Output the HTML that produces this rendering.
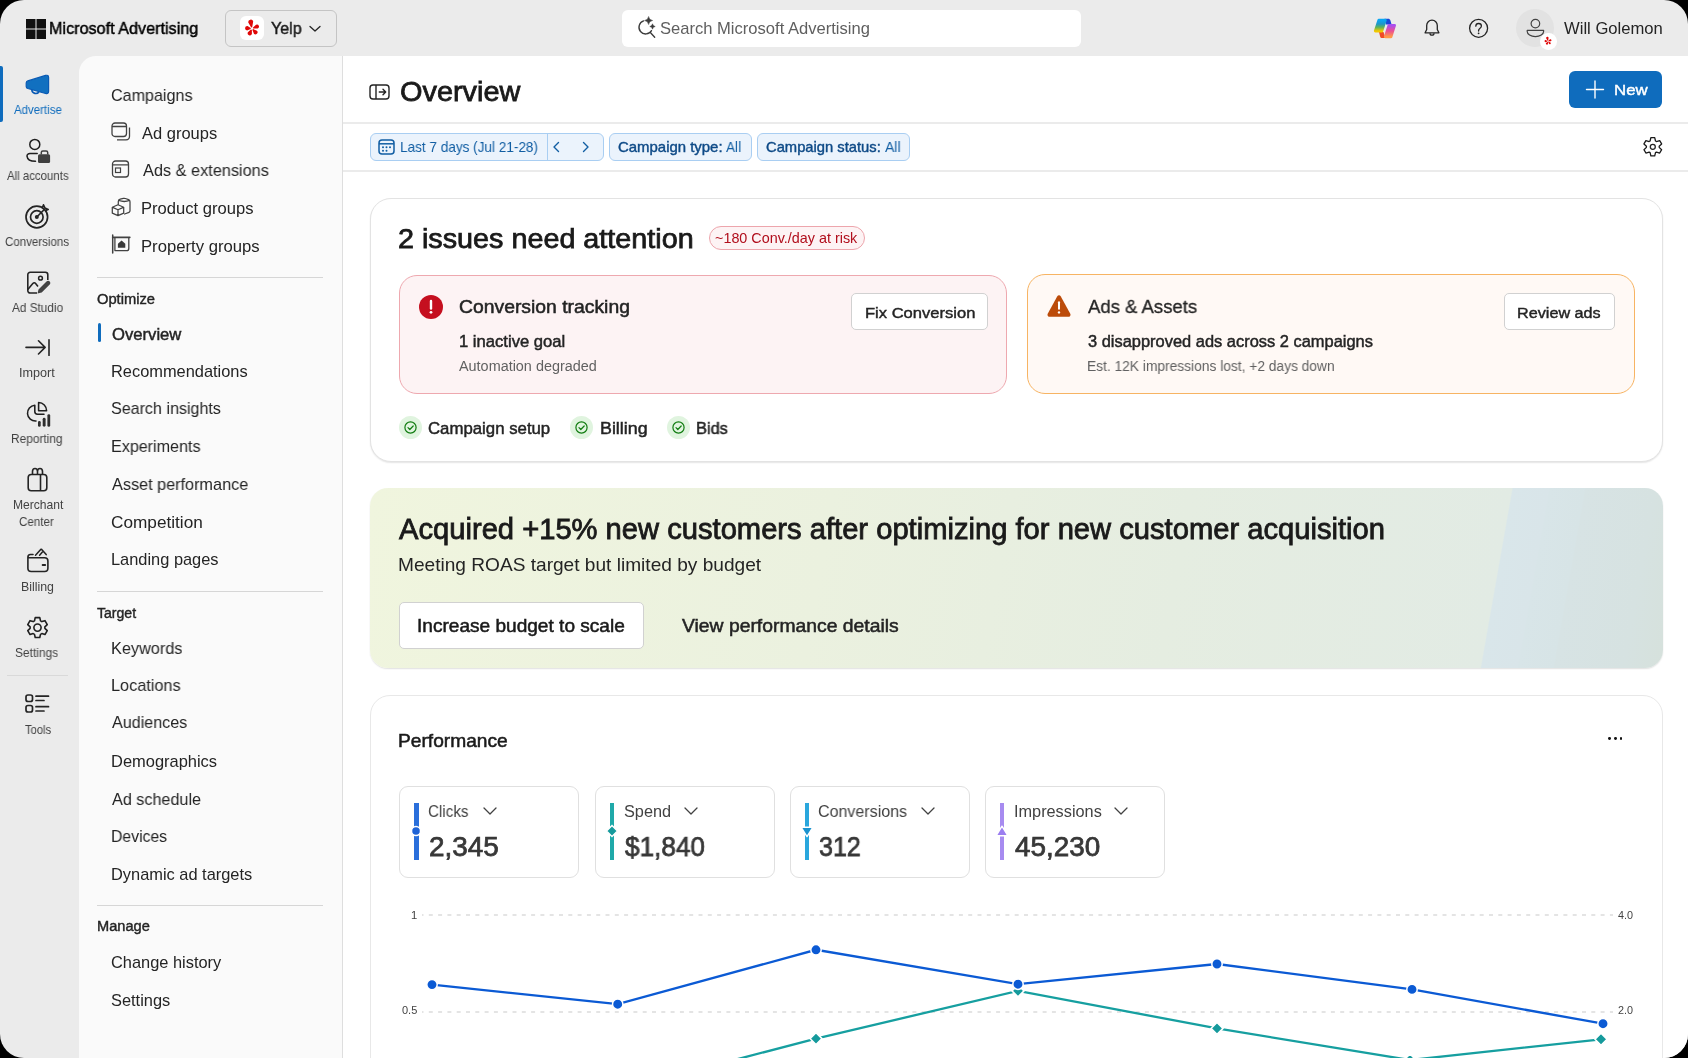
<!DOCTYPE html>
<html><head><meta charset="utf-8"><style>
html,body{margin:0;padding:0;}
body{width:1688px;height:1058px;background:#000;overflow:hidden;position:relative;font-family:"Liberation Sans",sans-serif;}
#win{position:absolute;left:0;top:0;width:1688px;height:1058px;border-radius:24px;background:#ebebeb;overflow:hidden;}
.t{position:absolute;white-space:nowrap;line-height:1;transform-origin:0 0;will-change:transform;}
.r{position:absolute;box-sizing:border-box;}
</style></head><body><div id="win">
<div class="r" style="left:79px;top:56px;width:263px;height:1040px;background:#fafafa;border-top-left-radius:17px;"></div>
<div class="r" style="left:343px;top:56px;width:1345px;height:1002px;background:#fff;"></div>
<div class="r" style="left:342px;top:56px;width:1px;height:1002px;background:#dedede;"></div>
<div class="r" style="left:343px;top:122px;width:1345px;height:2px;background:#ebebeb;"></div>
<div class="r" style="left:343px;top:170px;width:1345px;height:2px;background:#ebebeb;"></div>
<svg class="r" style="left:26px;top:18.5px;" width="20" height="20" viewBox="0 0 20 20" fill="none"><rect x="0" y="0" width="9.5" height="9.5" fill="#111"/><rect x="10.5" y="0" width="9.5" height="9.5" fill="#111"/><rect x="0" y="10.5" width="9.5" height="9.5" fill="#111"/><rect x="10.5" y="10.5" width="9.5" height="9.5" fill="#111"/></svg>
<div class="t" style="left:48.71px;top:20.00px;font-size:17.2px;color:#000;transform:scaleX(0.9410);-webkit-text-stroke:0.48px #000;">Microsoft Advertising</div>
<div class="r" style="left:225px;top:10px;width:112px;height:37px;border:1.3px solid #c4c4c4;border-radius:6px;"></div>
<div class="r" style="left:240px;top:16px;width:24px;height:24px;background:#fff;border-radius:6px;"></div>
<svg class="r" style="left:240px;top:16px;" width="24" height="24" viewBox="0 0 24 24" fill="none"><path fill="#e00707" d="M12.18 11.33L13.20 5.62A2.50 2.50 0 0 0 8.28 6.50L11.20 11.51ZM10.75 12.00L7.49 9.91A2.30 2.30 0 0 0 7.09 14.49L10.66 12.99ZM10.96 13.50L7.87 16.30A2.20 2.20 0 0 0 11.90 18.07L11.88 13.90ZM12.37 13.81L13.93 17.74A2.10 2.10 0 0 0 16.96 14.83L13.09 13.12ZM13.20 12.61L17.64 12.54A2.10 2.10 0 0 0 16.06 8.64L12.82 11.69Z"/></svg>
<div class="t" style="left:270.86px;top:20.00px;font-size:16.2px;color:#1a1a1a;transform:scaleX(0.9901);-webkit-text-stroke:0.45px #1a1a1a;">Yelp</div>
<svg class="r" style="left:309px;top:25px;" width="12" height="8" viewBox="0 0 12 8" fill="none"><path d="M1 1.5l5 4.5 5-4.5" stroke="#242424" stroke-width="1.3" stroke-linecap="round" stroke-linejoin="round"/></svg>
<div class="r" style="left:622px;top:9.5px;width:459px;height:37px;background:#fff;border-radius:6px;"></div>
<svg class="r" style="left:630px;top:12px;" width="32" height="30" viewBox="630 12 32 30" fill="none"><path d="M643.6 20.9A6.7 6.7 0 1 0 651.5 30.6M650.8 33L654.7 37.3" stroke="#3b3b3b" stroke-width="1.35" stroke-linecap="round"/><path d="M648.6 16.5Q649.12 19.98 652.6 20.5Q649.12 21.02 648.6 24.5Q648.08 21.02 644.6 20.5Q648.08 19.98 648.6 16.5ZM652.5 23.8Q652.85 26.15 655.2 26.5Q652.85 26.85 652.5 29.2Q652.15 26.85 649.8 26.5Q652.15 26.15 652.5 23.8Z" fill="#3b3b3b" stroke="#3b3b3b" stroke-width=".5" stroke-linejoin="round"/></svg>
<div class="t" style="left:659.70px;top:20.00px;font-size:16.1px;color:#5f5f5f;transform:scaleX(1.0290);">Search Microsoft Advertising</div>
<svg class="r" style="left:1370px;top:14px;" width="30" height="28" viewBox="0 0 30 28" fill="none"><defs><linearGradient id="cp1" x1="0" y1="0" x2="0" y2="1"><stop offset="0" stop-color="#0aa6f2"/><stop offset=".35" stop-color="#1f96c8"/><stop offset=".65" stop-color="#5cb35a"/><stop offset="1" stop-color="#f3c800"/></linearGradient><linearGradient id="cp2" x1="0" y1="0" x2="0" y2="1"><stop offset="0" stop-color="#a94ff0"/><stop offset=".5" stop-color="#ec4f93"/><stop offset="1" stop-color="#ff9a48"/></linearGradient></defs>
<path d="M14.5 4.8H18c1.4 0 2 .6 2.4 1.8L21.6 10.4H16z" fill="#1a48d8"/>
<path d="M9 18H13.5L15.4 24H12.2c-1.2 0-1.8-.5-2.1-1.5z" fill="#f04a26"/>
<path d="M8.8 6.2H15.3L11.8 17H5.3z" fill="url(#cp1)" stroke="url(#cp1)" stroke-width="2.8" stroke-linejoin="round"/>
<path d="M19 11.3H24.6L21 22.8H15.3z" fill="url(#cp2)" stroke="url(#cp2)" stroke-width="2.8" stroke-linejoin="round"/></svg>
<svg class="r" style="left:1422px;top:18px;" width="20" height="20" viewBox="0 0 20 20" fill="none"><path d="M10 2.2c-3 0-5.3 2.4-5.3 5.4v3.9l-1.6 3.3h13.8l-1.6-3.3V7.6c0-3-2.3-5.4-5.3-5.4z" stroke="#242424" stroke-width="1.3" stroke-linejoin="round"/><path d="M8 15.2a2 2 0 0 0 4 0" stroke="#242424" stroke-width="1.3"/></svg>
<svg class="r" style="left:1468px;top:18px;" width="21" height="21" viewBox="0 0 21 21" fill="none"><circle cx="10.6" cy="10.3" r="9" stroke="#242424" stroke-width="1.3"/><path d="M7.8 8.2c0-1.6 1.2-2.7 2.8-2.7s2.8 1.1 2.8 2.6c0 1.2-.7 1.8-1.6 2.4-.8.6-1.2 1-1.2 2v.5" stroke="#242424" stroke-width="1.3" stroke-linecap="round"/><circle cx="10.6" cy="15.3" r=".9" fill="#242424"/></svg>
<div class="r" style="left:1516px;top:9px;width:38px;height:38px;background:#e2e2e2;border-radius:50%;"></div>
<svg class="r" style="left:1525px;top:18px;" width="20" height="21" viewBox="0 0 20 21" fill="none"><circle cx="10.4" cy="5.6" r="4.3" stroke="#424242" stroke-width="1.2"/><path d="M2.2 12.3h16.4v1.3c0 2.6-3.5 5-8.2 5s-8.2-2.4-8.2-5z" stroke="#424242" stroke-width="1.2" stroke-linejoin="round"/></svg>
<div class="r" style="left:1540px;top:33px;width:16.5px;height:16.5px;background:#fff;border-radius:50%;"></div>
<svg class="r" style="left:1542px;top:35px;" width="12" height="12" viewBox="0 0 24 24" fill="none"><path fill="#e00707" d="M12.18 11.33L13.20 5.62A2.50 2.50 0 0 0 8.28 6.50L11.20 11.51ZM10.75 12.00L7.49 9.91A2.30 2.30 0 0 0 7.09 14.49L10.66 12.99ZM10.96 13.50L7.87 16.30A2.20 2.20 0 0 0 11.90 18.07L11.88 13.90ZM12.37 13.81L13.93 17.74A2.10 2.10 0 0 0 16.96 14.83L13.09 13.12ZM13.20 12.61L17.64 12.54A2.10 2.10 0 0 0 16.06 8.64L12.82 11.69Z"/></svg>
<div class="t" style="left:1563.64px;top:20.00px;font-size:16.1px;color:#242424;transform:scaleX(1.0331);">Will Golemon</div>
<div class="r" style="left:0px;top:66px;width:2.5px;height:56px;background:#0f6cbd;border-radius:0 2px 2px 0;"></div>
<div class="t" style="left:13.50px;top:104.00px;font-size:12.1px;color:#0f6cbd;transform:scaleX(0.9485);">Advertise</div>
<div class="t" style="left:6.64px;top:170.00px;font-size:12.1px;color:#424242;transform:scaleX(0.9451);">All accounts</div>
<div class="t" style="left:4.62px;top:236.00px;font-size:12.1px;color:#424242;transform:scaleX(0.9516);">Conversions</div>
<div class="t" style="left:12.14px;top:302.00px;font-size:12.1px;color:#424242;transform:scaleX(0.9738);">Ad Studio</div>
<div class="t" style="left:18.62px;top:367.00px;font-size:12.1px;color:#424242;transform:scaleX(1.0436);">Import</div>
<div class="t" style="left:11.34px;top:433.00px;font-size:12.1px;color:#424242;transform:scaleX(0.9822);">Reporting</div>
<div class="t" style="left:12.70px;top:499.00px;font-size:12.1px;color:#424242;transform:scaleX(0.9929);">Merchant</div>
<div class="t" style="left:19.48px;top:516.00px;font-size:12.1px;color:#424242;transform:scaleX(0.9587);">Center</div>
<div class="t" style="left:21.12px;top:581.00px;font-size:12.1px;color:#424242;transform:scaleX(1.0227);">Billing</div>
<div class="t" style="left:15.26px;top:647.00px;font-size:12.1px;color:#424242;transform:scaleX(0.9853);">Settings</div>
<div class="t" style="left:24.64px;top:724.00px;font-size:12.1px;color:#424242;transform:scaleX(0.9231);">Tools</div>
<div class="r" style="left:7px;top:675px;width:61px;height:1px;background:#d9d9d9;"></div>
<svg class="r" style="left:20px;top:68px;" width="36" height="32" viewBox="20 68 36 32" fill="none"><path d="M26.2 83Q26.2 81.4 27.8 80.9L45.6 75.4Q48.6 74.6 48.6 77.6V91.3Q48.6 94.3 45.6 93.5L27.8 88.5Q26.2 88 26.2 86.4Z" fill="#1170c0" stroke="#0a5ab4" stroke-width="1.2" stroke-linejoin="round"/><path d="M31.8 89V89.6A3.9 3.9 0 0 0 39.2 91.3" stroke="#0a5ab4" stroke-width="1.6"/></svg>
<svg class="r" style="left:25px;top:138px;" width="26" height="26" viewBox="0 0 26 26" fill="none"><circle cx="9.8" cy="6.4" r="5" stroke="#1f1f1f" stroke-width="1.5"/><path d="M12.2 15.4H4.9C3.2 15.4 2 16.6 2 18.1c.3 3 3.5 5.2 8.5 5.2" stroke="#1f1f1f" stroke-width="1.5" stroke-linecap="round"/><rect x="13" y="16.3" width="12.1" height="8.6" rx="1.5" fill="#3f3f3f"/><path d="M16.3 16.5V14.6c0-1 .6-1.6 1.6-1.6h3.2c1 0 1.6.6 1.6 1.6v1.9" stroke="#3f3f3f" stroke-width="1.5"/></svg>
<svg class="r" style="left:25px;top:204px;" width="25" height="25" viewBox="0 0 25 25" fill="none"><circle cx="11.8" cy="13" r="10.8" stroke="#242424" stroke-width="1.7"/><circle cx="11.8" cy="13" r="6.3" stroke="#242424" stroke-width="1.7"/><circle cx="11.8" cy="13" r="2" fill="#242424"/><path d="M11.8 13l8-8" stroke="#242424" stroke-width="1.7"/><path d="M17.5 3.3l1-2.5 1.5 3.2 3.2 1.4-2.5 1" stroke="#242424" stroke-width="1.6" stroke-linejoin="round"/></svg>
<svg class="r" style="left:26px;top:271px;" width="25" height="25" viewBox="0 0 25 25" fill="none"><path d="M11 22H4.3C2.8 22 1.8 21 1.8 19.5V3.8c0-1.5 1-2.5 2.5-2.5h15c1.5 0 2.5 1 2.5 2.5V9" stroke="#242424" stroke-width="1.6"/><circle cx="14.5" cy="7.2" r="1.9" stroke="#242424" stroke-width="1.5"/><path d="M1.8 18.5l5-6c1-1 2-1 3 .2l2.2 2.7" stroke="#242424" stroke-width="1.6"/><path d="M11.5 22.5l1-4 8-8c1-1 2.4-1 3.2 0s.9 2.2 0 3l-8 8z" fill="#424242"/></svg>
<svg class="r" style="left:25px;top:339px;" width="25" height="17" viewBox="0 0 25 17" fill="none"><path d="M1 8.4h19M13.5 1.8l6.6 6.6-6.6 6.6M24 .8v15.6" stroke="#242424" stroke-width="1.6" stroke-linecap="round" stroke-linejoin="round"/></svg>
<svg class="r" style="left:20px;top:396px;" width="36" height="36" viewBox="20 396 36 36" fill="none"><path d="M34.8 405.2A7.9 7.9 0 0 0 36 421M34.8 405.2V411.6Q34.8 414.3 37.5 414.3H44" stroke="#1f1f1f" stroke-width="1.55" stroke-linecap="round" stroke-linejoin="round"/><path d="M38.6 402.6V410.8H46.6A8.1 8.1 0 0 0 38.6 402.6Z" stroke="#1f1f1f" stroke-width="1.55" stroke-linejoin="round"/><rect x="38" y="421" width="2.7" height="5.8" rx="1.35" fill="#2e2e2e"/><rect x="42.7" y="417.7" width="2.9" height="9.1" rx="1.45" fill="#2e2e2e"/><rect x="47.4" y="414.2" width="2.8" height="12.6" rx="1.4" fill="#2e2e2e"/></svg>
<svg class="r" style="left:27px;top:467px;" width="21" height="25" viewBox="0 0 21 25" fill="none"><rect x="1.2" y="7.5" width="18.6" height="16.3" rx="3" stroke="#242424" stroke-width="1.6"/><path d="M13.5 7.5v16.3" stroke="#242424" stroke-width="1.6"/><path d="M5.5 7.5V4.5c0-1.7 1.1-3 2.5-3s2.5 1.3 2.5 3v3M10.5 7.5V4.5c0-1.7 1.1-3 2.5-3s2.5 1.3 2.5 3v3" stroke="#242424" stroke-width="1.6"/></svg>
<svg class="r" style="left:20px;top:540px;" width="36" height="40" viewBox="20 540 36 40" fill="none"><path d="M33 554.5H30.4Q27.9 554.5 27.9 557.2V568.2Q27.9 571.5 31.2 571.5H44.6Q47.9 571.5 47.9 568.2V561Q47.9 557.8 44.6 557.8H27.9" stroke="#242424" stroke-width="1.6" stroke-linejoin="round" stroke-linecap="round"/><path d="M35.5 555.3L40.7 549.4Q41.2 548.9 41.7 549.4L46.2 554.6M39.6 555.3L42.4 552" stroke="#242424" stroke-width="1.5" stroke-linecap="round" stroke-linejoin="round"/><path d="M42.6 565H45.2" stroke="#242424" stroke-width="1.8" stroke-linecap="round"/></svg>
<svg class="r" style="left:20px;top:610px;" width="36" height="36" viewBox="20 610 36 36" fill="none"><path d="M34.49 620.84 L35.21 617.66 L39.79 617.66 L40.51 620.84 L41.85 621.61 L44.96 620.64 L47.25 624.62 L44.86 626.83 L44.86 628.37 L47.25 630.58 L44.96 634.56 L41.85 633.59 L40.51 634.36 L39.79 637.54 L35.21 637.54 L34.49 634.36 L33.15 633.59 L30.04 634.56 L27.75 630.58 L30.14 628.37 L30.14 626.83 L27.75 624.62 L30.04 620.64 L33.15 621.61Z" stroke="#1f1f1f" stroke-width="1.6" stroke-linejoin="round"/><circle cx="37.5" cy="627.6" r="3.6" stroke="#1f1f1f" stroke-width="1.6"/></svg>
<svg class="r" style="left:25px;top:694px;" width="25" height="20" viewBox="0 0 25 20" fill="none"><rect x="1" y="1" width="6.5" height="6.5" rx="2" stroke="#242424" stroke-width="1.7"/><rect x="1" y="11.5" width="6.5" height="6.5" rx="2" stroke="#242424" stroke-width="1.7"/><path d="M11 2.2h12.5M11 6.5h8M11 12.7h12.5M11 17h8" stroke="#242424" stroke-width="1.7" stroke-linecap="round"/></svg>
<div class="t" style="left:110.62px;top:87.00px;font-size:16.4px;color:#242424;transform:scaleX(0.9833);">Campaigns</div>
<div class="t" style="left:142.42px;top:125.00px;font-size:16.4px;color:#242424;transform:scaleX(1.0058);">Ad groups</div>
<div class="t" style="left:142.86px;top:162.00px;font-size:16.4px;color:#242424;transform:scaleX(0.9941);">Ads &amp; extensions</div>
<div class="t" style="left:141.26px;top:200.00px;font-size:16.4px;color:#242424;transform:scaleX(1.0119);">Product groups</div>
<div class="t" style="left:141.26px;top:238.00px;font-size:16.4px;color:#242424;transform:scaleX(1.0171);">Property groups</div>
<div class="r" style="left:97px;top:277.3px;width:226px;height:1.2px;background:#d6d6d6;"></div>
<div class="t" style="left:97.26px;top:292.00px;font-size:14.0px;color:#242424;transform:scaleX(1.0507);-webkit-text-stroke:0.39px #242424;">Optimize</div>
<div class="r" style="left:97.5px;top:323px;width:3px;height:19px;background:#0f6cbd;border-radius:2px;"></div>
<div class="t" style="left:111.73px;top:327.00px;font-size:15.8px;color:#242424;transform:scaleX(1.0533);-webkit-text-stroke:0.44px #242424;">Overview</div>
<div class="t" style="left:110.70px;top:363.00px;font-size:16.4px;color:#242424;">Recommendations</div>
<div class="t" style="left:110.70px;top:400.00px;font-size:16.4px;color:#242424;transform:scaleX(0.9810);">Search insights</div>
<div class="t" style="left:110.70px;top:438.00px;font-size:16.4px;color:#242424;transform:scaleX(0.9826);">Experiments</div>
<div class="t" style="left:111.50px;top:476.00px;font-size:16.4px;color:#242424;transform:scaleX(0.9900);">Asset performance</div>
<div class="t" style="left:110.70px;top:514.00px;font-size:16.4px;color:#242424;transform:scaleX(1.0494);">Competition</div>
<div class="t" style="left:110.70px;top:551.00px;font-size:16.4px;color:#242424;">Landing pages</div>
<div class="r" style="left:97px;top:591.3px;width:226px;height:1.2px;background:#d6d6d6;"></div>
<div class="t" style="left:97.26px;top:606.00px;font-size:14.0px;color:#242424;transform:scaleX(1.0048);-webkit-text-stroke:0.39px #242424;">Target</div>
<div class="t" style="left:110.70px;top:640.00px;font-size:16.4px;color:#242424;transform:scaleX(0.9926);">Keywords</div>
<div class="t" style="left:110.70px;top:677.00px;font-size:16.4px;color:#242424;transform:scaleX(0.9924);">Locations</div>
<div class="t" style="left:111.50px;top:714.00px;font-size:16.4px;color:#242424;transform:scaleX(0.9832);">Audiences</div>
<div class="t" style="left:111.20px;top:753.00px;font-size:16.4px;color:#242424;transform:scaleX(1.0038);">Demographics</div>
<div class="t" style="left:112.00px;top:791.00px;font-size:16.4px;color:#242424;transform:scaleX(0.9876);">Ad schedule</div>
<div class="t" style="left:111.20px;top:828.00px;font-size:16.4px;color:#242424;transform:scaleX(0.9622);">Devices</div>
<div class="t" style="left:111.20px;top:866.00px;font-size:16.4px;color:#242424;">Dynamic ad targets</div>
<div class="r" style="left:97px;top:904.8px;width:226px;height:1.2px;background:#d6d6d6;"></div>
<div class="t" style="left:97.40px;top:919.00px;font-size:14.0px;color:#242424;transform:scaleX(1.0427);-webkit-text-stroke:0.39px #242424;">Manage</div>
<div class="t" style="left:111.20px;top:954.00px;font-size:16.4px;color:#242424;transform:scaleX(0.9963);">Change history</div>
<div class="t" style="left:111.20px;top:992.00px;font-size:16.4px;color:#242424;transform:scaleX(0.9969);">Settings</div>
<svg class="r" style="left:111px;top:122px;" width="20" height="19" viewBox="0 0 20 19" fill="none"><rect x="1" y="1" width="14.5" height="13.5" rx="3" stroke="#424242" stroke-width="1.3"/><path d="M1 4.5h14.5" stroke="#424242" stroke-width="1.3"/><path d="M18.5 5.5v8.8c0 2-1.5 3.5-3.5 3.5H6" stroke="#424242" stroke-width="1.3"/></svg>
<svg class="r" style="left:111px;top:160px;" width="20" height="19" viewBox="0 0 20 19" fill="none"><rect x="1.5" y="1" width="16" height="16" rx="3" stroke="#424242" stroke-width="1.3"/><path d="M1.5 4.8h16" stroke="#424242" stroke-width="1.3"/><rect x="4.5" y="8" width="5" height="4.5" stroke="#424242" stroke-width="1.2"/></svg>
<svg class="r" style="left:105px;top:192px;" width="30" height="30" viewBox="105 192 30 30" fill="none"><path d="M112.3 207.2L118 204.7L123.7 207.2V213.2L118 215.6L112.3 213.2Z M112.6 207.4L118 209.8L123.4 207.4 M118 209.8V215.3" stroke="#424242" stroke-width="1.25" stroke-linejoin="round"/><path d="M118.3 204.3V201.6Q118.3 199.8 120.2 199.2L123.4 198.4Q124.4 198.2 125.4 198.5L128.6 199.6Q130 200.2 130 201.8V210.8Q130 211.9 129 212.3L124.6 214 M118.8 200.4Q124.3 202.6 129.6 200.4" stroke="#424242" stroke-width="1.25" stroke-linejoin="round" stroke-linecap="round"/></svg>
<svg class="r" style="left:105px;top:230px;" width="30" height="30" viewBox="105 230 30 30" fill="none"><path d="M112.7 235V253" stroke="#424242" stroke-width="1.5" stroke-linecap="round"/><path d="M112.7 237.3H129.8" stroke="#424242" stroke-width="1.7" stroke-linecap="round"/><path d="M114.9 237.5V250.6H126.6Q128.8 250.6 128.8 248.4V237.5" stroke="#424242" stroke-width="1.3" stroke-linejoin="round"/><path d="M117.9 247.7V243.8L121.6 240.6L125.3 243.8V247.7Z" fill="#3a3a3a"/></svg>
<svg class="r" style="left:369px;top:84px;" width="21" height="16" viewBox="0 0 21 16" fill="none"><rect x="1" y="1" width="19" height="14" rx="3" stroke="#242424" stroke-width="1.4"/><path d="M7 1v14" stroke="#242424" stroke-width="1.4"/><path d="M10.3 8h6.3M14 5.3L16.7 8 14 10.7" stroke="#242424" stroke-width="1.4" stroke-linecap="round" stroke-linejoin="round"/></svg>
<div class="t" style="left:400.38px;top:78.00px;font-size:27.1px;color:#1a1a1a;transform:scaleX(1.0652);-webkit-text-stroke:0.76px #1a1a1a;">Overview</div>
<div class="r" style="left:1569px;top:71px;width:93px;height:37px;background:#0f6cbd;border-radius:6px;"></div>
<svg class="r" style="left:1585px;top:80px;" width="20" height="19" viewBox="0 0 20 19" fill="none"><path d="M10 1v17M1.5 9.5h17" stroke="#fff" stroke-width="1.4" stroke-linecap="round"/></svg>
<div class="t" style="left:1613.72px;top:82.00px;font-size:15.2px;color:#fff;transform:scaleX(1.1079);-webkit-text-stroke:0.43px #fff;">New</div>
<div class="r" style="left:370px;top:133px;width:234px;height:28px;background:#ebf3fc;border:1.3px solid #a9cef2;border-radius:6px;"></div>
<div class="r" style="left:546.5px;top:134px;width:1px;height:26px;background:#a9cef2;"></div>
<svg class="r" style="left:378px;top:139px;" width="17" height="16" viewBox="0 0 17 16" fill="none"><rect x="1" y="1" width="15" height="14" rx="3" stroke="#115ea3" stroke-width="1.5"/><path d="M1 4.8h15" stroke="#115ea3" stroke-width="1.5"/><circle cx="5" cy="8.3" r="1" fill="#115ea3"/><circle cx="8.5" cy="8.3" r="1" fill="#115ea3"/><circle cx="12" cy="8.3" r="1" fill="#115ea3"/><circle cx="5" cy="11.7" r="1" fill="#115ea3"/><circle cx="8.5" cy="11.7" r="1" fill="#115ea3"/></svg>
<div class="t" style="left:400.34px;top:140.00px;font-size:14.8px;color:#115ea3;transform:scaleX(0.9166);">Last 7 days (Jul 21-28)</div>
<svg class="r" style="left:551px;top:141px;" width="10" height="12" viewBox="0 0 10 12" fill="none"><path d="M7.5 1.5L3 6l4.5 4.5" stroke="#115ea3" stroke-width="1.4" stroke-linecap="round" stroke-linejoin="round"/></svg>
<svg class="r" style="left:581px;top:141px;" width="10" height="12" viewBox="0 0 10 12" fill="none"><path d="M2.5 1.5L7 6l-4.5 4.5" stroke="#115ea3" stroke-width="1.4" stroke-linecap="round" stroke-linejoin="round"/></svg>
<div class="r" style="left:609px;top:133px;width:143px;height:28px;background:#ebf3fc;border:1.3px solid #a9cef2;border-radius:6px;"></div>
<div class="t" style="left:618.13px;top:140.00px;font-size:14.2px;color:#0e4a87;transform:scaleX(1.0524);-webkit-text-stroke:0.4px #0e4a87;">Campaign type:</div>
<div class="t" style="left:726.28px;top:140.00px;font-size:14.8px;color:#115ea3;transform:scaleX(0.9179);">All</div>
<div class="r" style="left:757px;top:133px;width:153px;height:28px;background:#ebf3fc;border:1.3px solid #a9cef2;border-radius:6px;"></div>
<div class="t" style="left:766.13px;top:140.00px;font-size:14.2px;color:#0e4a87;transform:scaleX(1.0394);-webkit-text-stroke:0.4px #0e4a87;">Campaign status:</div>
<div class="t" style="left:884.72px;top:140.00px;font-size:14.8px;color:#115ea3;transform:scaleX(0.9484);">All</div>
<svg class="r" style="left:1640px;top:134px;" width="26" height="26" viewBox="1640 134 26 26" fill="none"><path d="M1650.10 141.00 L1650.87 137.70 L1654.73 137.70 L1655.50 141.00 L1656.47 141.56 L1659.71 140.58 L1661.64 143.93 L1659.18 146.24 L1659.18 147.36 L1661.64 149.67 L1659.71 153.02 L1656.47 152.04 L1655.50 152.60 L1654.73 155.90 L1650.87 155.90 L1650.10 152.60 L1649.13 152.04 L1645.89 153.02 L1643.96 149.67 L1646.42 147.36 L1646.42 146.24 L1643.96 143.93 L1645.89 140.58 L1649.13 141.56Z" stroke="#1a1a1a" stroke-width="1.3" stroke-linejoin="round"/><circle cx="1652.8" cy="146.8" r="2.5" stroke="#242424" stroke-width="1.3"/></svg>
<div class="r" style="left:370px;top:198px;width:1293px;height:264px;background:#fff;border:1px solid #e3e3e3;border-radius:21px;box-shadow:0 1px 1.5px rgba(0,0,0,.10);"></div>
<div class="t" style="left:398.16px;top:226.00px;font-size:27.0px;color:#1a1a1a;transform:scaleX(1.0646);-webkit-text-stroke:0.75px #1a1a1a;">2 issues need attention</div>
<div class="r" style="left:709px;top:226px;width:156px;height:24px;background:#fdf3f4;border:1.2px solid #eda5ac;border-radius:12px;"></div>
<div class="t" style="left:715.26px;top:231.00px;font-size:14.2px;color:#b10e1c;transform:scaleX(1.0124);">~180 Conv./day at risk</div>
<div class="r" style="left:399px;top:274.5px;width:608px;height:119px;background:#fdf3f4;border:1.3px solid #eea8af;border-radius:18px;"></div>
<svg class="r" style="left:419px;top:295px;" width="24" height="24" viewBox="0 0 24 24" fill="none"><circle cx="12" cy="12" r="12" fill="#c50f1f"/><path d="M12 6v7.5" stroke="#fff" stroke-width="2.4" stroke-linecap="round"/><circle cx="12" cy="17.3" r="1.4" fill="#fff"/></svg>
<div class="t" style="left:458.89px;top:298.00px;font-size:18.6px;color:#242424;transform:scaleX(1.0400);-webkit-text-stroke:0.52px #242424;">Conversion tracking</div>
<div class="t" style="left:459.21px;top:333.00px;font-size:16.3px;color:#242424;transform:scaleX(1.0210);-webkit-text-stroke:0.46px #242424;">1 inactive goal</div>
<div class="t" style="left:459.42px;top:359.00px;font-size:14.0px;color:#616161;transform:scaleX(1.0290);">Automation degraded</div>
<div class="r" style="left:851px;top:293px;width:137px;height:37px;background:#fff;border:1.2px solid #d1d1d1;border-radius:5px;"></div>
<div class="t" style="left:865.07px;top:305.00px;font-size:15.4px;color:#242424;transform:scaleX(1.0752);-webkit-text-stroke:0.43px #242424;">Fix Conversion</div>
<div class="r" style="left:1026.5px;top:274px;width:608px;height:119.5px;background:#fff9f5;border:1.3px solid #f7b463;border-radius:18px;"></div>
<svg class="r" style="left:1047px;top:295px;" width="24" height="22" viewBox="0 0 26 24" fill="none"><path d="M11 1.5c.9-1.5 3.1-1.5 4 0l10.3 19c.8 1.5-.3 3.3-2 3.3H2.7c-1.7 0-2.8-1.8-2-3.3z" fill="#bc4b09"/><path d="M13 8v7" stroke="#fff" stroke-width="2.2" stroke-linecap="round"/><circle cx="13" cy="19" r="1.3" fill="#fff"/></svg>
<div class="t" style="left:1088.15px;top:298.00px;font-size:18.8px;color:#242424;transform:scaleX(0.9864);-webkit-text-stroke:0.3px #242424;">Ads &amp; Assets</div>
<div class="t" style="left:1088.23px;top:333.00px;font-size:16.3px;color:#242424;transform:scaleX(1.0090);-webkit-text-stroke:0.46px #242424;">3 disapproved ads across 2 campaigns</div>
<div class="t" style="left:1087.20px;top:359.00px;font-size:14.0px;color:#616161;transform:scaleX(0.9836);">Est. 12K impressions lost, +2 days down</div>
<div class="r" style="left:1504px;top:293px;width:111px;height:37px;background:#fff;border:1.2px solid #d1d1d1;border-radius:5px;"></div>
<div class="t" style="left:1516.99px;top:305.00px;font-size:15.4px;color:#242424;transform:scaleX(1.0516);-webkit-text-stroke:0.43px #242424;">Review ads</div>
<div class="r" style="left:399px;top:416px;width:23px;height:23px;background:#e0f4df;border-radius:50%;"></div>
<svg class="r" style="left:404px;top:421px;" width="13" height="13" viewBox="0 0 13 13" fill="none"><circle cx="6.5" cy="6.5" r="5.6" stroke="#107c10" stroke-width="1.2"/><path d="M4 6.7l1.8 1.8L9.2 5" stroke="#107c10" stroke-width="1.2" stroke-linecap="round" stroke-linejoin="round"/></svg>
<div class="t" style="left:428.36px;top:421.00px;font-size:16.8px;color:#242424;-webkit-text-stroke:0.47px #242424;">Campaign setup</div>
<div class="r" style="left:570.2px;top:416px;width:23px;height:23px;background:#e0f4df;border-radius:50%;"></div>
<svg class="r" style="left:575.2px;top:421px;" width="13" height="13" viewBox="0 0 13 13" fill="none"><circle cx="6.5" cy="6.5" r="5.6" stroke="#107c10" stroke-width="1.2"/><path d="M4 6.7l1.8 1.8L9.2 5" stroke="#107c10" stroke-width="1.2" stroke-linecap="round" stroke-linejoin="round"/></svg>
<div class="t" style="left:599.87px;top:421.00px;font-size:16.8px;color:#242424;transform:scaleX(1.0630);-webkit-text-stroke:0.47px #242424;">Billing</div>
<div class="r" style="left:666.5px;top:416px;width:23px;height:23px;background:#e0f4df;border-radius:50%;"></div>
<svg class="r" style="left:671.5px;top:421px;" width="13" height="13" viewBox="0 0 13 13" fill="none"><circle cx="6.5" cy="6.5" r="5.6" stroke="#107c10" stroke-width="1.2"/><path d="M4 6.7l1.8 1.8L9.2 5" stroke="#107c10" stroke-width="1.2" stroke-linecap="round" stroke-linejoin="round"/></svg>
<div class="t" style="left:696.13px;top:421.00px;font-size:16.8px;color:#242424;transform:scaleX(0.9751);-webkit-text-stroke:0.47px #242424;">Bids</div>
<div class="r" style="left:370px;top:488px;width:1293px;height:180px;border-radius:18px;background:linear-gradient(100deg,#f0f5de 0%,#ebf1df 35%,#e5ede1 62%,#e2ebe4 86.2%,#d9e6ea 86.3%,#d9e5e9 89%,#d8e5e8 89.1%,#d7e4e6 91.7%,#d7e3e4 91.8%,#d6e2e1 97%,#d6e1dc 100%);box-shadow:0 1px 1.5px rgba(0,0,0,.12);"></div>
<div class="t" style="left:398.61px;top:515.00px;font-size:28.8px;color:#1a1a1a;transform:scaleX(1.0123);-webkit-text-stroke:0.81px #1a1a1a;">Acquired +15% new customers after optimizing for new customer acquisition</div>
<div class="t" style="left:398.20px;top:556.00px;font-size:18.6px;color:#242424;transform:scaleX(1.0273);">Meeting ROAS target but limited by budget</div>
<div class="r" style="left:399px;top:602px;width:245px;height:47px;background:#fff;border:1.2px solid #d1d1d1;border-radius:5px;"></div>
<div class="t" style="left:416.75px;top:617.00px;font-size:18.2px;color:#1a1a1a;transform:scaleX(1.0486);-webkit-text-stroke:0.51px #1a1a1a;">Increase budget to scale</div>
<div class="t" style="left:682.41px;top:617.00px;font-size:18.2px;color:#242424;transform:scaleX(1.0628);-webkit-text-stroke:0.51px #242424;">View performance details</div>
<div class="r" style="left:370px;top:695px;width:1293px;height:400px;background:#fff;border:1px solid #e8e8e8;border-radius:20px;"></div>
<div class="t" style="left:398.11px;top:732.00px;font-size:18.2px;color:#1a1a1a;transform:scaleX(1.0544);-webkit-text-stroke:0.51px #1a1a1a;">Performance</div>
<div class="r" style="left:1607.95px;top:736.9px;width:2.9px;height:2.9px;background:#111;border-radius:50%;"></div>
<div class="r" style="left:1613.75px;top:736.9px;width:2.9px;height:2.9px;background:#111;border-radius:50%;"></div>
<div class="r" style="left:1619.55px;top:736.9px;width:2.9px;height:2.9px;background:#111;border-radius:50%;"></div>
<div class="r" style="left:399px;top:785.5px;width:180px;height:92.5px;background:#fff;border:1.2px solid #e0e0e0;border-radius:9px;"></div>
<div class="r" style="left:414px;top:803px;width:4.5px;height:57px;background:#2a6fdb;"></div>
<svg class="r" style="left:410.2px;top:825.3px;" width="12" height="12" viewBox="0 0 12 12" fill="none"><circle cx="6" cy="6" r="4.5" fill="#1f63d6" stroke="#fff" stroke-width="1.5"/></svg>
<div class="t" style="left:428.26px;top:803.00px;font-size:16.3px;color:#424242;transform:scaleX(0.9328);">Clicks</div>
<svg class="r" style="left:482.8px;top:806px;" width="14" height="10" viewBox="0 0 14 10" fill="none"><path d="M1 2l6 6 6-6" stroke="#424242" stroke-width="1.3" stroke-linecap="round" stroke-linejoin="round"/></svg>
<div class="t" style="left:428.65px;top:834.00px;font-size:26.8px;color:#383838;transform:scaleX(1.0403);-webkit-text-stroke:0.75px #383838;">2,345</div>
<div class="r" style="left:594.6px;top:785.5px;width:180px;height:92.5px;background:#fff;border:1.2px solid #e0e0e0;border-radius:9px;"></div>
<div class="r" style="left:609.6px;top:803px;width:4.5px;height:57px;background:#1fa9a9;"></div>
<svg class="r" style="left:604.8000000000001px;top:824.3px;" width="14" height="14" viewBox="0 0 14 14" fill="none"><path d="M7 1.5L12.5 7 7 12.5 1.5 7z" fill="#159a9c" stroke="#fff" stroke-width="1.5"/></svg>
<div class="t" style="left:623.62px;top:803.00px;font-size:16.3px;color:#424242;transform:scaleX(0.9956);">Spend</div>
<svg class="r" style="left:683.5px;top:806px;" width="14" height="10" viewBox="0 0 14 10" fill="none"><path d="M1 2l6 6 6-6" stroke="#424242" stroke-width="1.3" stroke-linecap="round" stroke-linejoin="round"/></svg>
<div class="t" style="left:625.29px;top:834.00px;font-size:26.8px;color:#383838;transform:scaleX(0.9756);-webkit-text-stroke:0.75px #383838;">$1,840</div>
<div class="r" style="left:789.6px;top:785.5px;width:180px;height:92.5px;background:#fff;border:1.2px solid #e0e0e0;border-radius:9px;"></div>
<div class="r" style="left:804.6px;top:803px;width:4.5px;height:57px;background:#2aa7dd;"></div>
<svg class="r" style="left:798.8000000000001px;top:823.3px;" width="16" height="16" viewBox="0 0 16 16" fill="none"><path d="M2.2 4.3h11.6L8 13.6z" fill="#1b93cf" stroke="#fff" stroke-width="1.4" stroke-linejoin="round"/></svg>
<div class="t" style="left:818.26px;top:803.00px;font-size:16.3px;color:#424242;transform:scaleX(0.9847);">Conversions</div>
<svg class="r" style="left:921.4px;top:806px;" width="14" height="10" viewBox="0 0 14 10" fill="none"><path d="M1 2l6 6 6-6" stroke="#424242" stroke-width="1.3" stroke-linecap="round" stroke-linejoin="round"/></svg>
<div class="t" style="left:819.47px;top:834.00px;font-size:26.8px;color:#383838;transform:scaleX(0.9348);-webkit-text-stroke:0.75px #383838;">312</div>
<div class="r" style="left:984.6px;top:785.5px;width:180px;height:92.5px;background:#fff;border:1.2px solid #e0e0e0;border-radius:9px;"></div>
<div class="r" style="left:999.6px;top:803px;width:4.5px;height:57px;background:#a78bf0;"></div>
<svg class="r" style="left:993.8000000000001px;top:823.3px;" width="16" height="16" viewBox="0 0 16 16" fill="none"><path d="M2.2 12.7h11.6L8 3.2z" fill="#9b7ef0" stroke="#fff" stroke-width="1.4" stroke-linejoin="round"/></svg>
<div class="t" style="left:1013.62px;top:803.00px;font-size:16.3px;color:#424242;">Impressions</div>
<svg class="r" style="left:1113.5px;top:806px;" width="14" height="10" viewBox="0 0 14 10" fill="none"><path d="M1 2l6 6 6-6" stroke="#424242" stroke-width="1.3" stroke-linecap="round" stroke-linejoin="round"/></svg>
<div class="t" style="left:1014.81px;top:834.00px;font-size:26.8px;color:#383838;transform:scaleX(1.0394);-webkit-text-stroke:0.75px #383838;">45,230</div>
<svg class="r" style="left:370px;top:890px;" width="1318" height="168" viewBox="370 890 1318 168" fill="none">
<path d="M422 915H1613M422 1012H1613" stroke="#dcdcdc" stroke-width="1.5" stroke-dasharray="4 5.3" stroke-dashoffset="2.5"/>
<polyline points="617.7,1090.4 816,1038.6 1018,990.9 1217,1028.4 1410,1060 1601,1039.3" stroke="#169fa0" stroke-width="2.3" fill="none"/>
<g fill="#159a9c" stroke="#fff" stroke-width="1.5">
<path d="M816 1032.6l6 6-6 6-6-6z"/><path d="M1018 984.9l6 6-6 6-6-6z"/><path d="M1217 1022.4l6 6-6 6-6-6z"/><path d="M1410 1054l6 6-6 6-6-6z"/><path d="M1601 1033.3l6 6-6 6-6-6z"/></g>
<polyline points="432,984.6 617.7,1004.2 816,949.8 1018,984.2 1217,964 1412,989.4 1603,1023.7" stroke="#0b5ad4" stroke-width="2.3" fill="none"/>
<g fill="#0b5ad4" stroke="#fff" stroke-width="1.5">
<circle cx="432" cy="984.6" r="5.2"/><circle cx="617.7" cy="1004.2" r="5.2"/><circle cx="816" cy="949.8" r="5.2"/><circle cx="1018" cy="984.2" r="5.2"/><circle cx="1217" cy="964" r="5.2"/><circle cx="1412" cy="989.4" r="5.2"/><circle cx="1603" cy="1023.7" r="5.2"/></g>
</svg>
<div class="t" style="left:410.70px;top:910.00px;font-size:11.0px;color:#424242;transform:scaleX(1.0221);">1</div>
<div class="t" style="left:402.14px;top:1005.00px;font-size:11.0px;color:#424242;transform:scaleX(0.9863);">0.5</div>
<div class="t" style="left:1618.28px;top:910.00px;font-size:10.8px;color:#424242;transform:scaleX(0.9752);">4.0</div>
<div class="t" style="left:1618.28px;top:1005.00px;font-size:10.8px;color:#424242;transform:scaleX(0.9752);">2.0</div>
</div></body></html>
